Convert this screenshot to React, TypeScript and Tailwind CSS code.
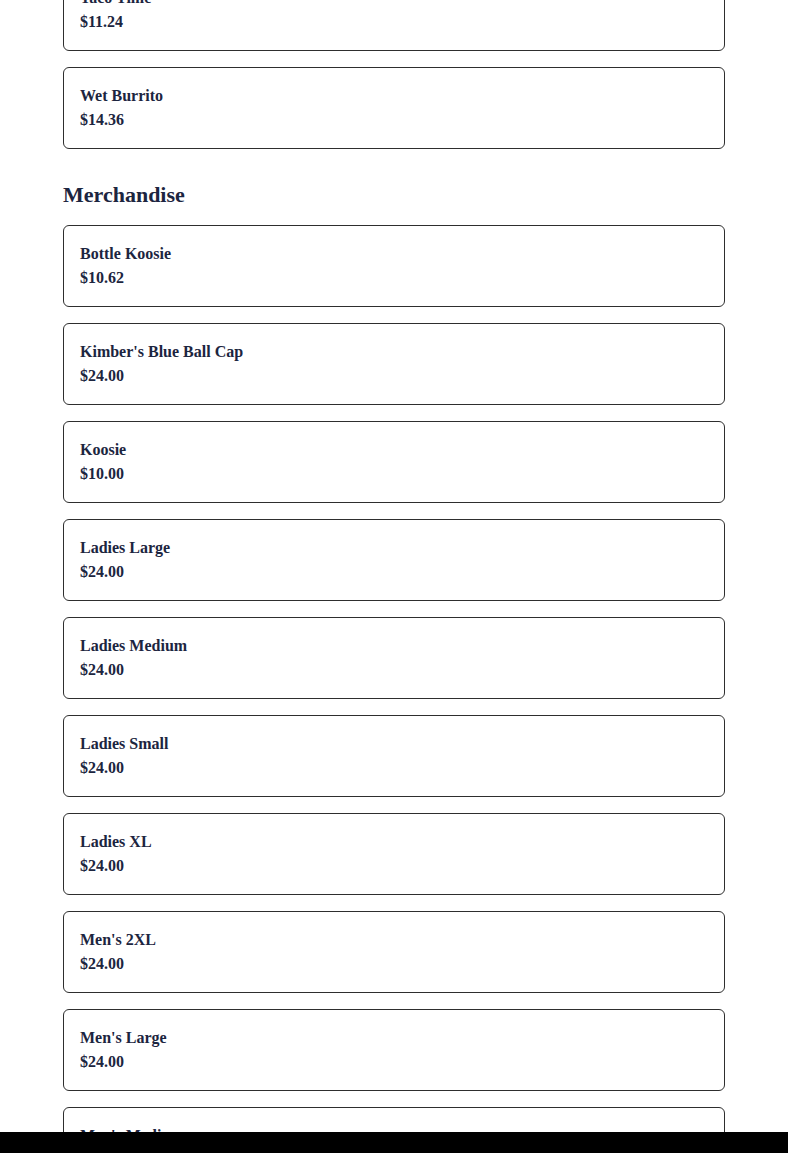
import React from 'react';

type Item = { name: string; price: string };

const food: Item[] = [
  { name: 'Taco Time', price: '$11.24' },
  { name: 'Wet Burrito', price: '$14.36' },
];

const merch: Item[] = [
  { name: 'Bottle Koosie', price: '$10.62' },
  { name: "Kimber's Blue Ball Cap", price: '$24.00' },
  { name: 'Koosie', price: '$10.00' },
  { name: 'Ladies Large', price: '$24.00' },
  { name: 'Ladies Medium', price: '$24.00' },
  { name: 'Ladies Small', price: '$24.00' },
  { name: 'Ladies XL', price: '$24.00' },
  { name: "Men's 2XL", price: '$24.00' },
  { name: "Men's Large", price: '$24.00' },
  { name: "Men's Medium", price: '$24.00' },
];

function ItemCard({ item }: { item: Item }) {
  return (
    <div className="border border-[#2e2e2e] rounded-md p-4 bg-white">
      <p className="text-base leading-6 font-bold text-[#1c2540]">{item.name}</p>
      <p className="text-base leading-6 font-bold text-[#1c2540]">{item.price}</p>
    </div>
  );
}

export default function App() {
  return (
    <div className="min-h-screen bg-white font-['Liberation_Serif',serif]">
      <div className="w-[662px] mx-auto -mt-[31px]">
        <div className="flex flex-col gap-4">
          {food.map((it) => (
            <ItemCard key={it.name} item={it} />
          ))}
        </div>
        <h2 className="mt-[30px] mb-[14px] text-[22px] leading-8 font-bold text-[#1c2540]">Merchandise</h2>
        <div className="flex flex-col gap-4">
          {merch.map((it) => (
            <ItemCard key={it.name} item={it} />
          ))}
        </div>
      </div>
      <div className="fixed bottom-0 left-0 right-0 h-[21px] bg-black" />
    </div>
  );
}
